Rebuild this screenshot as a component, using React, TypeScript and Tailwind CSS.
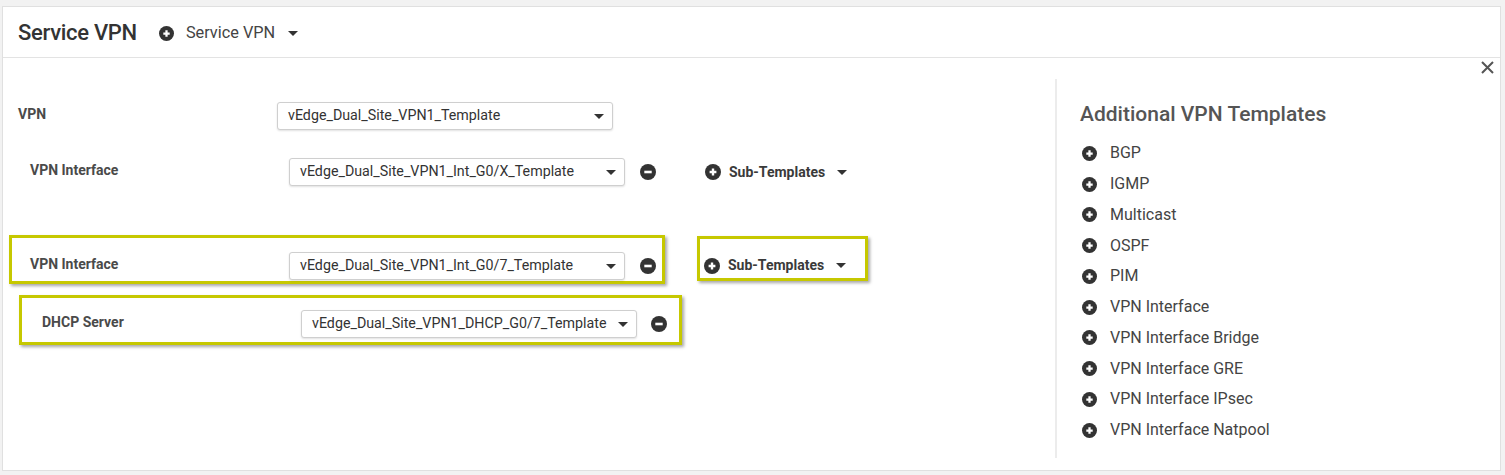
import React from "react";

const PlusCircle = ({ size = 16 }: { size?: number }) => (
  <svg width={size} height={size} viewBox="0 0 16 16" className="shrink-0">
    <circle cx="8" cy="8" r="8" fill="#333" />
    <path d="M4.6 8h6.8M8 4.6v6.8" stroke="#fff" strokeWidth="2.4" />
  </svg>
);

const MinusCircle = ({ size = 16 }: { size?: number }) => (
  <svg width={size} height={size} viewBox="0 0 16 16" className="shrink-0">
    <circle cx="8" cy="8" r="8" fill="#333" />
    <path d="M4.3 8h7.4" stroke="#fff" strokeWidth="2.6" />
  </svg>
);

const Caret = () => (
  <svg width="10" height="5" viewBox="0 0 10 5" className="shrink-0">
    <path d="M0 0h10L5 5z" fill="#333" />
  </svg>
);

const Select = ({ value }: { value: string }) => (
  <div className="w-[336px] h-[28px] shrink-0 bg-white border border-[#cfcfcf] rounded-[3px] shadow-[0_1px_2px_rgba(0,0,0,0.12)] flex items-center justify-between pl-[10px] pr-[8px] text-[14.25px] text-[#333] whitespace-nowrap overflow-hidden">
    <span>{value}</span>
    <Caret />
  </div>
);

const Label = ({ children }: { children: React.ReactNode }) => (
  <div className="w-[259px] shrink-0 pb-[4px] text-[14px] font-bold text-[#4a4a4a]">{children}</div>
);

const SubTemplates = () => (
  <div className="flex items-center">
    <PlusCircle />
    <span className="ml-[8px] text-[14px] font-bold text-[#3a3a3a]">Sub-Templates</span>
    <span className="ml-[12px]"><Caret /></span>
  </div>
);

const items = [
  "BGP",
  "IGMP",
  "Multicast",
  "OSPF",
  "PIM",
  "VPN Interface",
  "VPN Interface Bridge",
  "VPN Interface GRE",
  "VPN Interface IPsec",
  "VPN Interface Natpool",
];

export default function App() {
  return (
    <div className="w-[1505px] h-[475px] bg-[#f2f2f2] pt-[6px] pl-[2px] font-['Roboto',sans-serif] overflow-hidden">
      <div className="w-[1499px] h-[465px] bg-white border border-[#e0e0e0] flex flex-col">
        {/* Header */}
        <div className="h-[51px] shrink-0 border-b border-[#e3e3e3] flex items-center pl-[15px] pt-[2px]">
          <span className="text-[22px] font-medium text-[#333] leading-none tracking-[-0.3px]">Service VPN</span>
          <span className="ml-[22px] flex items-center">
            <PlusCircle size={15} />
            <span className="ml-[12px] text-[16.3px] text-[#444]">Service VPN</span>
            <span className="ml-[13px]"><Caret /></span>
          </span>
        </div>

        {/* Body */}
        <div className="relative flex flex-1">
          <svg className="absolute top-[3px] right-[6px]" width="13" height="13" viewBox="0 0 13 13">
            <path d="M1 1l11 11M12 1L1 12" stroke="#555" strokeWidth="2" />
          </svg>

          {/* Left column */}
          <div className="w-[1052px] shrink-0 pt-[44px] flex flex-col">
            <div className="flex items-center pl-[15px]">
              <Label>VPN</Label>
              <Select value="vEdge_Dual_Site_VPN1_Template" />
            </div>

            <div className="flex items-center pl-[27px] mt-[28px]">
              <Label>VPN Interface</Label>
              <Select value="vEdge_Dual_Site_VPN1_Int_G0/X_Template" />
              <span className="ml-[15px]"><MinusCircle /></span>
              <span className="ml-[49px]"><SubTemplates /></span>
            </div>

            <div className="flex items-start mt-[49px] ml-[6px]">
              <div className="w-[656px] border-[3px] border-[#c6c800] shadow-[2px_2px_3px_rgba(0,0,0,0.35)] flex items-center pl-[18px] pt-[14px] pb-[1px]">
                <Label>VPN Interface</Label>
                <Select value="vEdge_Dual_Site_VPN1_Int_G0/7_Template" />
                <span className="ml-[15px]"><MinusCircle /></span>
              </div>
              <div className="ml-[32px] mt-[1px] w-[171px] h-[45px] border-[3px] border-[#c6c800] shadow-[2px_2px_3px_rgba(0,0,0,0.35)] pl-[4px] pt-[16px]">
                <SubTemplates />
              </div>
            </div>

            <div className="mt-[11px] ml-[16px] w-[663px] border-[3px] border-[#c6c800] shadow-[2px_2px_3px_rgba(0,0,0,0.35)] flex items-center pl-[20px] pt-[12px] pb-[4px]">
              <Label>DHCP Server</Label>
              <Select value="vEdge_Dual_Site_VPN1_DHCP_G0/7_Template" />
              <span className="ml-[14px]"><MinusCircle /></span>
            </div>
          </div>

          {/* Right column */}
          <div className="flex-1 mt-[21px] mb-[12px] border-l-2 border-[#ececec] pl-[23px] pt-[21px]">
            <div className="text-[21px] leading-[28px] font-medium text-[#555]">Additional VPN Templates</div>
            <div className="mt-[10px] flex flex-col">
              {items.map((it) => (
                <div key={it} className="h-[30.75px] flex items-center pl-[2px]">
                  <PlusCircle size={15} />
                  <span className="ml-[13px] text-[16px] text-[#444]">{it}</span>
                </div>
              ))}
            </div>
          </div>
        </div>
      </div>
    </div>
  );
}
